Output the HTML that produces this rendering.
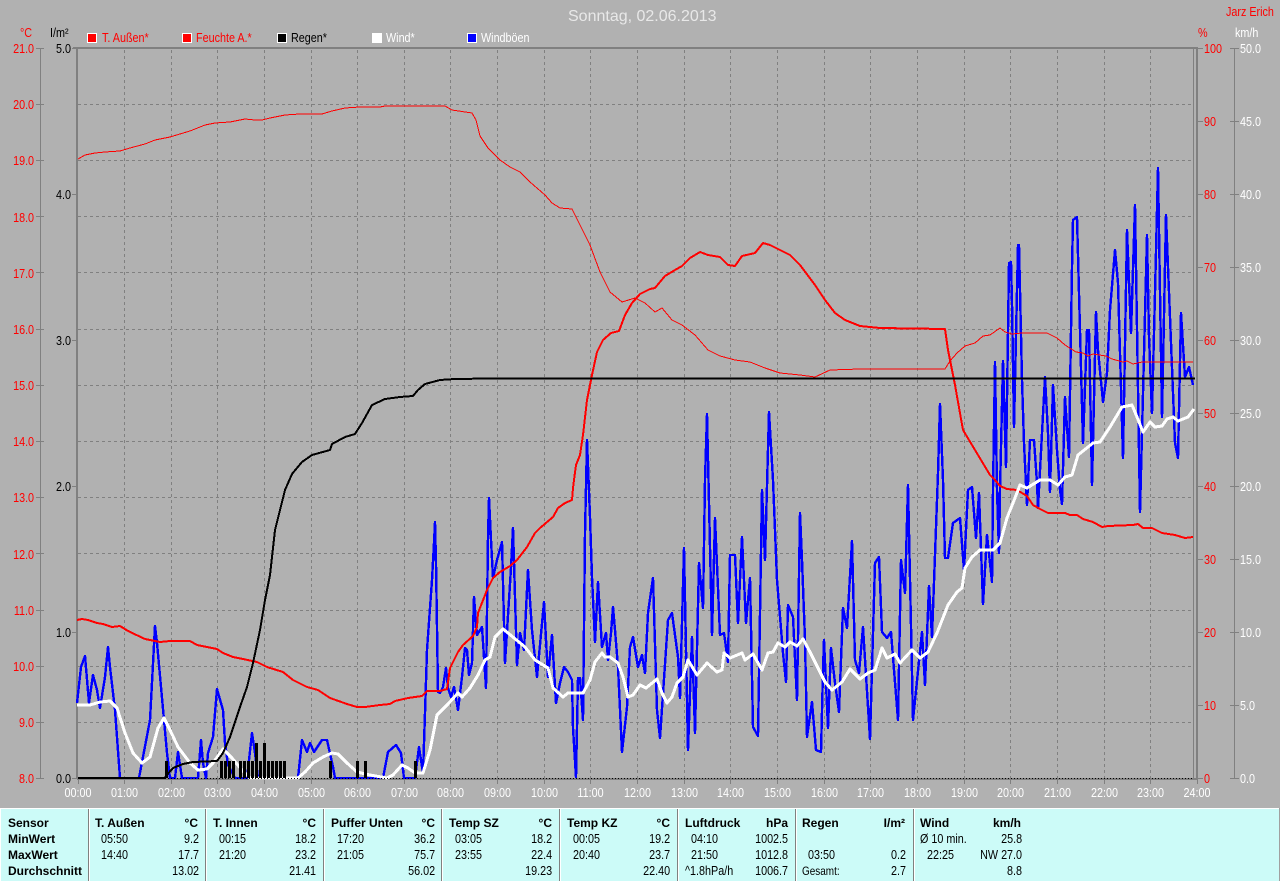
<!DOCTYPE html>
<html lang="de">
<head>
<meta charset="utf-8">
<title>Sonntag, 02.06.2013</title>
<style>
html,body{margin:0;padding:0;background:#b1b1b1;width:1280px;height:881px;overflow:hidden}
svg{display:block}
text{font-family:"Liberation Sans",Arial,sans-serif;font-size:13px;fill:#000}
.l,.r,.c{transform-box:fill-box}
.l{transform-origin:0% 50%;transform:scaleX(.83)}
.r{text-anchor:end;transform-origin:100% 50%;transform:scaleX(.83)}
.c{text-anchor:middle;transform-origin:50% 50%;transform:scaleX(.83)}
.b{font-weight:bold;font-size:12px}
.e{text-anchor:end}
.red text,text.red{fill:#f00}
.wh text,text.wh{fill:#fff}
.ln{fill:none;stroke-linejoin:round;shape-rendering:crispEdges}
</style>
</head>
<body>
<svg xmlns="http://www.w3.org/2000/svg" width="1280" height="881" viewBox="0 0 1280 881">
<rect width="1280" height="881" fill="#b1b1b1"/>

<!-- grid -->
<g stroke="#808080" stroke-width="1" stroke-dasharray="3 3" fill="none" shape-rendering="crispEdges">
<path d="M78 104.5H1193M78 160.5H1193M78 216.5H1193M78 272.5H1193M78 329.5H1193M78 385.5H1193M78 441.5H1193M78 497.5H1193M78 553.5H1193M78 610.5H1193M78 666.5H1193M78 722.5H1193"/>
<path d="M124.5 50V778M171.5 50V778M217.5 50V778M264.5 50V778M311.5 50V778M357.5 50V778M404.5 50V778M450.5 50V778M497.5 50V778M544.5 50V778M590.5 50V778M637.5 50V778M684.5 50V778M730.5 50V778M777.5 50V778M824.5 50V778M870.5 50V778M917.5 50V778M964.5 50V778M1010.5 50V778M1057.5 50V778M1104.5 50V778M1150.5 50V778"/>
</g>

<!-- axes -->
<g stroke="#808080" fill="none" shape-rendering="crispEdges">
<path stroke-width="1" d="M40.5 48V778M1234.5 48V778M1193.5 48V778"/>
<path stroke-width="2" d="M77 47V779M1197 47V779M73 48H1197M77 779H1197"/>
<path stroke-width="1" d="M36 48.5H44M36 104.5H44M36 160.5H44M36 216.5H44M36 272.5H44M36 329.5H44M36 385.5H44M36 441.5H44M36 497.5H44M36 553.5H44M36 610.5H44M36 666.5H44M36 722.5H44M36 778.5H44"/>
<path stroke-width="1" d="M72 48.5H77M72 194.5H77M72 340.5H77M72 486.5H77M72 632.5H77M72 778.5H77"/>
<path stroke-width="1" d="M1197 48.5H1203M1197 121.5H1203M1197 194.5H1203M1197 267.5H1203M1197 340.5H1203M1197 413.5H1203M1197 486.5H1203M1197 559.5H1203M1197 632.5H1203M1197 705.5H1203M1197 778.5H1203"/>
<path stroke-width="1" d="M1230 48.5H1239M1230 121.5H1239M1230 194.5H1239M1230 267.5H1239M1230 340.5H1239M1230 413.5H1239M1230 486.5H1239M1230 559.5H1239M1230 632.5H1239M1230 705.5H1239M1230 778.5H1239"/>
<path stroke-width="1" d="M78.5 779V784M124.5 779V784M171.5 779V784M217.5 779V784M264.5 779V784M311.5 779V784M357.5 779V784M404.5 779V784M450.5 779V784M497.5 779V784M544.5 779V784M590.5 779V784M637.5 779V784M684.5 779V784M730.5 779V784M777.5 779V784M824.5 779V784M870.5 779V784M917.5 779V784M964.5 779V784M1010.5 779V784M1057.5 779V784M1104.5 779V784M1150.5 779V784M1197.5 779V784"/>
</g>

<!-- Windböen -->
<polyline class="ln" stroke="#0000ff" stroke-width="2.4" points="77,703 81,667 85,656 89,703 93,675 97,690 100,708 105,677 108,647 110,667 115,710 120,778 139,778 150,720 155,626 157,643 167,753 170,778 175,778 178,752 182,778 198,778 201,740 203,763 206,778 208,753 213,737 217,689 223,710 225,743 228,765 235,778 247,778 252,733 255,753 258,778 298,778 302,740 307,752 310,743 314,752 322,740 327,740 333,767 335,778 383,778 388,752 396,745 401,753 404,778 415,778 419,747 423,773 425,713 427,650 432,580 434,543 435,522 436,563 438,692 440,693 443,687 446,668 448,688 451,697 454,687 458,710 462,677 465,648 467,650 469,675 472,663 474,597 477,635 482,627 486,688 488,537 489,498 491,540 493,578 497,560 502,542 505,663 511,568 513,528 517,665 520,633 524,650 528,570 532,630 537,677 544,602 548,677 552,635 556,703 560,683 564,667 568,672 572,680 573,728 576,777 578,678 580,678 583,720 585,533 587,440 590,517 592,577 595,642 598,582 602,647 606,633 608,660 611,633 613,607 615,630 618,667 622,752 627,707 630,647 633,637 638,667 642,655 645,673 648,613 653,578 657,710 660,738 668,620 672,613 678,657 680,698 684,548 688,750 692,637 695,733 699,563 703,608 705,480 707,414 712,635 715,518 720,635 724,633 728,662 730,555 735,555 738,623 742,537 746,623 750,578 753,727 758,736 762,490 765,560 769,412 773,480 777,580 783,653 786,682 788,605 793,617 797,700 800,513 802,560 805,640 807,737 812,702 816,750 821,752 823,670 824,640 828,728 831,648 835,683 839,712 843,608 847,628 852,541 855,660 859,673 863,627 870,739 875,563 879,557 882,632 887,638 891,632 898,720 901,560 905,593 908,485 913,720 922,632 925,685 929,586 932,637 938,473 940,404 943,480 945,558 948,558 953,523 960,518 964,570 968,490 972,487 976,538 979,493 983,604 987,535 992,582 993,490 995,362 997,490 999,553 1000,490 1003,361 1006,467 1009,263 1011,262 1012,303 1014,427 1018,245 1019,245 1022,380 1024,443 1027,505 1030,440 1034,440 1037,483 1038,508 1045,377 1048,433 1050,492 1053,385 1057,450 1060,490 1062,504 1065,397 1067,427 1069,457 1072,267 1073,220 1077,217 1079,293 1083,443 1087,330 1089,330 1092,485 1096,312 1098,350 1103,402 1107,373 1110,310 1115,250 1118,283 1123,458 1127,230 1131,333 1135,205 1140,512 1147,235 1149,337 1152,413 1155,293 1158,168 1162,417 1166,215 1168,267 1175,443 1178,458 1181,313 1185,377 1189,367 1193,385"/>

<!-- Feuchte (thin red) -->
<polyline class="ln" stroke="#ff0000" stroke-width="1" points="78,159 85,155 95,153 105,152 120,151 130,148 145,144 155,140 170,137 180,134 190,131 205,125 215,123 230,122 245,119 255,120 262,120 270,118 285,115 300,114 322,114 332,111 345,108 360,107 380,107 385,106 445,106 452,110 472,113 476,120 480,136 488,148 500,160 510,167 520,172 530,182 545,195 552,203 560,208 572,209 580,225 590,245 600,272 610,292 622,302 635,298 645,303 655,312 662,308 672,320 682,325 695,335 708,350 720,356 735,360 750,362 765,368 780,373 800,375 815,377 830,370 860,369 945,369 950,361 957,353 965,346 975,343 983,336 990,335 1000,328 1005,332 1012,334 1022,333 1047,333 1057,338 1065,345 1076,352 1083,353 1088,356 1093,354 1106,356 1112,359 1123,362 1127,361 1133,364 1142,362 1193,362"/>

<!-- T. Außen (thick red) -->
<polyline class="ln" stroke="#ff0000" stroke-width="2" points="77,620 82,619 88,620 97,623 103,624 112,627 120,626 128,631 145,639 160,642 170,641 190,641 197,645 217,649 223,653 233,657 243,659 257,662 267,667 283,672 293,680 307,687 318,690 330,698 347,704 357,707 365,707 380,705 390,704 395,701 408,698 422,696 427,691 440,691 447,689 450,668 458,652 463,645 473,636 477,627 478,613 487,590 493,578 500,572 510,566 517,560 527,547 535,533 540,528 553,517 558,508 565,503 572,500 573,488 574,480 576,465 580,455 583,435 587,400 592,375 597,352 603,340 611,333 619,331 625,315 632,303 640,294 650,289 655,288 665,276 675,270 682,266 690,258 700,252 708,255 720,257 728,265 735,266 742,256 755,253 763,243 770,245 790,255 800,265 815,285 825,300 835,313 845,320 860,326 880,328 945,329 948,350 955,385 963,430 975,450 990,475 995,480 1000,486 1007,489 1017,490 1027,496 1033,505 1040,509 1048,513 1065,513 1070,515 1077,515 1083,519 1093,522 1102,527 1108,526 1133,525 1138,524 1143,528 1152,528 1162,533 1175,535 1185,538 1193,537"/>

<!-- Wind -->
<polyline class="ln" stroke="#ffffff" stroke-width="3" points="77,705 90,705 100,702 110,701 117,708 125,733 133,753 142,763 150,757 158,728 164,718 170,730 178,747 190,763 198,770 207,769 213,763 223,749 232,758 242,770 250,778 298,778 305,772 313,763 323,757 332,753 338,754 347,763 357,772 370,775 387,778 393,775 402,765 408,768 415,773 423,773 430,750 437,715 447,705 458,693 462,697 470,688 478,675 485,660 490,657 495,637 503,629 508,633 525,647 535,660 548,668 553,688 563,697 568,693 583,693 590,680 595,662 602,653 605,657 610,657 618,663 623,677 628,697 633,695 640,685 646,688 657,679 662,693 667,703 672,697 677,683 683,677 688,660 697,675 707,663 717,672 722,670 724,653 730,658 742,653 745,660 753,654 762,670 768,653 773,652 778,643 785,647 790,642 797,646 803,639 810,652 818,668 825,682 832,690 842,682 850,669 860,679 868,673 875,670 882,648 887,658 895,654 900,663 912,650 920,658 928,652 937,633 948,605 957,592 962,588 965,568 972,557 980,550 993,550 1000,543 1007,518 1015,498 1020,485 1027,488 1040,480 1050,480 1058,485 1065,477 1072,475 1078,455 1093,443 1100,442 1110,427 1122,407 1132,405 1137,417 1143,432 1150,422 1155,427 1162,426 1167,419 1173,417 1178,421 1188,417 1194,409"/>

<!-- Regen -->
<path d="M78 778H165" stroke="#000" stroke-width="2" fill="none" shape-rendering="crispEdges"/>
<path d="M78 778.5H1193" stroke="#000" stroke-width="1" stroke-dasharray="1 2" fill="none" shape-rendering="crispEdges"/>
<polyline class="ln" stroke="#000" stroke-width="2" points="165,777 173,768 183,764 193,762 217,761 223,753 230,737 240,707 247,687 253,663 260,630 265,600 270,575 275,530 280,510 285,490 292,474 302,462 312,455 330,450 332,444 345,437 355,434 362,423 372,405 385,399 400,397 413,396 418,390 425,384 440,380 455,379 490,378.5 1195,378.5"/>
<path fill="none" stroke="#000" stroke-width="3" shape-rendering="crispEdges" d="M166.5 778V761M221.5 778V761M225.5 778V761M229.5 778V761M233.5 778V761M240.5 778V761M244.5 778V761M248.5 778V761M252.5 778V761M256.5 778V743M260.5 778V761M264.5 778V743M268.5 778V761M272.5 778V761M276.5 778V761M280.5 778V761M284.5 778V761M330.5 778V761M357.5 778V761M365.5 778V761M415.5 778V761"/>

<!-- title -->
<text x="568" y="21" style="font-size:16px;fill:#e8e8e8">Sonntag, 02.06.2013</text>
<text class="l red" x="1226" y="16">Jarz Erich</text>

<!-- units -->
<text class="l red" x="20" y="37">°C</text>
<text class="l" x="50" y="37">I/m²</text>
<text class="l red" x="1198" y="37">%</text>
<text class="l wh" x="1235" y="37">km/h</text>

<!-- legend -->
<g shape-rendering="crispEdges" stroke="#fff" stroke-width="1">
<rect x="87.5" y="33.5" width="9" height="9" fill="#f00"/>
<rect x="182.5" y="33.5" width="9" height="9" fill="#f00"/>
<rect x="277.5" y="33.5" width="9" height="9" fill="#000"/>
<rect x="372.5" y="33.5" width="9" height="9" fill="#fff"/>
<rect x="467.5" y="33.5" width="9" height="9" fill="#00f"/>
</g>
<text class="l red" x="102" y="42">T. Außen*</text>
<text class="l red" x="196" y="42">Feuchte A.*</text>
<text class="l" x="291" y="42">Regen*</text>
<text class="l wh" x="386" y="42">Wind*</text>
<text class="l wh" x="481" y="42">Windböen</text>

<!-- left temp labels -->
<g class="red">
<text class="r" x="34" y="53">21.0</text>
<text class="r" x="34" y="109">20.0</text>
<text class="r" x="34" y="165">19.0</text>
<text class="r" x="34" y="222">18.0</text>
<text class="r" x="34" y="278">17.0</text>
<text class="r" x="34" y="334">16.0</text>
<text class="r" x="34" y="390">15.0</text>
<text class="r" x="34" y="446">14.0</text>
<text class="r" x="34" y="502">13.0</text>
<text class="r" x="34" y="559">12.0</text>
<text class="r" x="34" y="615">11.0</text>
<text class="r" x="34" y="671">10.0</text>
<text class="r" x="34" y="727">9.0</text>
<text class="r" x="34" y="783">8.0</text>
</g>
<!-- rain labels -->
<text class="r" x="71" y="53">5.0</text>
<text class="r" x="71" y="199">4.0</text>
<text class="r" x="71" y="345">3.0</text>
<text class="r" x="71" y="491">2.0</text>
<text class="r" x="71" y="637">1.0</text>
<text class="r" x="71" y="783">0.0</text>
<!-- % labels -->
<g class="red">
<text class="l" x="1204" y="53">100</text>
<text class="l" x="1204" y="126">90</text>
<text class="l" x="1204" y="199">80</text>
<text class="l" x="1204" y="272">70</text>
<text class="l" x="1204" y="345">60</text>
<text class="l" x="1204" y="418">50</text>
<text class="l" x="1204" y="491">40</text>
<text class="l" x="1204" y="564">30</text>
<text class="l" x="1204" y="637">20</text>
<text class="l" x="1204" y="710">10</text>
<text class="l" x="1204" y="783">0</text>
</g>
<!-- km/h labels -->
<g class="wh">
<text class="l" x="1240" y="53">50.0</text>
<text class="l" x="1240" y="126">45.0</text>
<text class="l" x="1240" y="199">40.0</text>
<text class="l" x="1240" y="272">35.0</text>
<text class="l" x="1240" y="345">30.0</text>
<text class="l" x="1240" y="418">25.0</text>
<text class="l" x="1240" y="491">20.0</text>
<text class="l" x="1240" y="564">15.0</text>
<text class="l" x="1240" y="637">10.0</text>
<text class="l" x="1240" y="710">5.0</text>
<text class="l" x="1240" y="783">0.0</text>
</g>
<!-- hours -->
<g class="wh">
<text class="c" x="78" y="797">00:00</text>
<text class="c" x="124.5" y="797">01:00</text>
<text class="c" x="171.5" y="797">02:00</text>
<text class="c" x="217.5" y="797">03:00</text>
<text class="c" x="264.5" y="797">04:00</text>
<text class="c" x="311.5" y="797">05:00</text>
<text class="c" x="357.5" y="797">06:00</text>
<text class="c" x="404.5" y="797">07:00</text>
<text class="c" x="450.5" y="797">08:00</text>
<text class="c" x="497.5" y="797">09:00</text>
<text class="c" x="544.5" y="797">10:00</text>
<text class="c" x="590.5" y="797">11:00</text>
<text class="c" x="637.5" y="797">12:00</text>
<text class="c" x="684.5" y="797">13:00</text>
<text class="c" x="730.5" y="797">14:00</text>
<text class="c" x="777.5" y="797">15:00</text>
<text class="c" x="824.5" y="797">16:00</text>
<text class="c" x="870.5" y="797">17:00</text>
<text class="c" x="917.5" y="797">18:00</text>
<text class="c" x="964.5" y="797">19:00</text>
<text class="c" x="1010.5" y="797">20:00</text>
<text class="c" x="1057.5" y="797">21:00</text>
<text class="c" x="1104.5" y="797">22:00</text>
<text class="c" x="1150.5" y="797">23:00</text>
<text class="c" x="1197" y="797">24:00</text>
</g>

<!-- table -->
<rect x="0" y="808" width="1280" height="73" fill="#ccfbf8"/>
<g shape-rendering="crispEdges">
<rect x="0" y="808" width="1280" height="1" fill="#fff"/>
<rect x="0" y="808" width="1" height="73" fill="#fff"/>
<rect x="1279" y="808" width="1" height="73" fill="#a0a0a0"/>
<g fill="#808080">
<rect x="88" y="809" width="1" height="72"/>
<rect x="205" y="809" width="1" height="72"/>
<rect x="323" y="809" width="1" height="72"/>
<rect x="441" y="809" width="1" height="72"/>
<rect x="559" y="809" width="1" height="72"/>
<rect x="677" y="809" width="1" height="72"/>
<rect x="795" y="809" width="1" height="72"/>
<rect x="913" y="809" width="1" height="72"/>
</g>
<g fill="#fff">
<rect x="89" y="809" width="1" height="72"/>
<rect x="206" y="809" width="1" height="72"/>
<rect x="324" y="809" width="1" height="72"/>
<rect x="442" y="809" width="1" height="72"/>
<rect x="560" y="809" width="1" height="72"/>
<rect x="678" y="809" width="1" height="72"/>
<rect x="796" y="809" width="1" height="72"/>
<rect x="914" y="809" width="1" height="72"/>
</g>
</g>

<text class="b" x="8" y="827">Sensor</text>
<text class="b" x="8" y="843">MinWert</text>
<text class="b" x="8" y="859">MaxWert</text>
<text class="b" x="8" y="875">Durchschnitt</text>

<text class="b" x="95" y="827">T. Außen</text>
<text class="b e" x="198" y="827">°C</text>
<text class="l" x="101" y="843">05:50</text>
<text class="r" x="199" y="843">9.2</text>
<text class="l" x="101" y="859">14:40</text>
<text class="r" x="199" y="859">17.7</text>
<text class="r" x="199" y="875">13.02</text>

<text class="b" x="213" y="827">T. Innen</text>
<text class="b e" x="316" y="827">°C</text>
<text class="l" x="219" y="843">00:15</text>
<text class="r" x="316" y="843">18.2</text>
<text class="l" x="219" y="859">21:20</text>
<text class="r" x="316" y="859">23.2</text>
<text class="r" x="316" y="875">21.41</text>

<text class="b" x="331" y="827">Puffer Unten</text>
<text class="b e" x="435" y="827">°C</text>
<text class="l" x="337" y="843">17:20</text>
<text class="r" x="435" y="843">36.2</text>
<text class="l" x="337" y="859">21:05</text>
<text class="r" x="435" y="859">75.7</text>
<text class="r" x="435" y="875">56.02</text>

<text class="b" x="449" y="827">Temp SZ</text>
<text class="b e" x="552" y="827">°C</text>
<text class="l" x="455" y="843">03:05</text>
<text class="r" x="552" y="843">18.2</text>
<text class="l" x="455" y="859">23:55</text>
<text class="r" x="552" y="859">22.4</text>
<text class="r" x="552" y="875">19.23</text>

<text class="b" x="567" y="827">Temp KZ</text>
<text class="b e" x="670" y="827">°C</text>
<text class="l" x="573" y="843">00:05</text>
<text class="r" x="670" y="843">19.2</text>
<text class="l" x="573" y="859">20:40</text>
<text class="r" x="670" y="859">23.7</text>
<text class="r" x="670" y="875">22.40</text>

<text class="b" x="685" y="827">Luftdruck</text>
<text class="b e" x="788" y="827">hPa</text>
<text class="l" x="691" y="843">04:10</text>
<text class="r" x="788" y="843">1002.5</text>
<text class="l" x="691" y="859">21:50</text>
<text class="r" x="788" y="859">1012.8</text>
<text class="l" x="685" y="875">^1.8hPa/h</text>
<text class="r" x="788" y="875">1006.7</text>

<text class="b" x="802" y="827">Regen</text>
<text class="b e" x="905" y="827">I/m²</text>
<text class="l" x="808" y="859">03:50</text>
<text class="r" x="906" y="859">0.2</text>
<text class="l" x="802" y="875" style="font-size:12px">Gesamt:</text>
<text class="r" x="906" y="875">2.7</text>

<text class="b" x="920" y="827">Wind</text>
<text class="b e" x="1021" y="827">km/h</text>
<text class="l" x="920" y="843">Ø 10 min.</text>
<text class="r" x="1022" y="843">25.8</text>
<text class="l" x="927" y="859">22:25</text>
<text class="r" x="1022" y="859">NW 27.0</text>
<text class="r" x="1022" y="875">8.8</text>
</svg>
</body>
</html>
